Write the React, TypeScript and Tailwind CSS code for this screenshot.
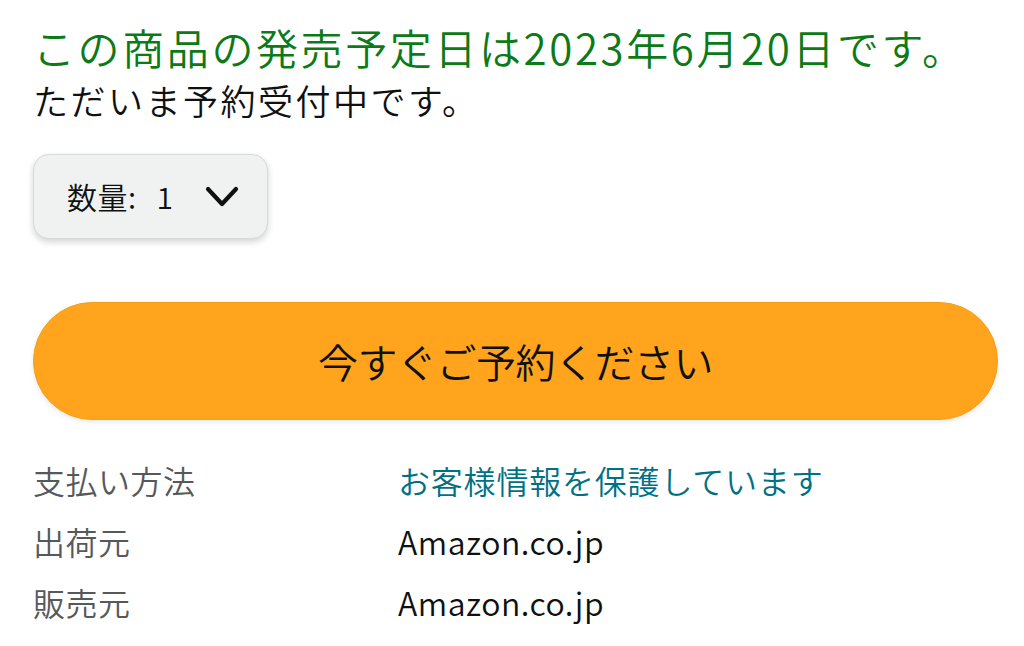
import React from "react";

export default function App() {
  return (
    <div
      className="w-[1024px] h-[646px] bg-white overflow-hidden pl-[33px] pr-[26px] pt-[20px] font-[350]"
      style={{ fontFamily: '"Noto Sans CJK JP", "Noto Sans", sans-serif' }}
    >
      <div className="text-[42px] leading-[54px] text-[#0c7a16] whitespace-nowrap tracking-[2.6px]">
        この商品の発売予定日は2023年6月20日です。
      </div>
      <div className="text-[35px] leading-[54px] text-[#0f1111] whitespace-nowrap -mt-[1px] tracking-[2.5px]">
        ただいま予約受付中です。
      </div>
      <div className="mt-[27px] w-[235px] h-[85px] rounded-[16px] bg-[#f0f2f2] border border-[#d5d9d9] shadow-[0_3px_6px_rgba(15,17,17,0.18)] flex items-center pl-[33px] pr-[28px] justify-between">
        <span className="flex items-center gap-[20px] text-[30px] text-[#0f1111] tracking-[0.5px]">
          <span>数量:</span>
          <span>1</span>
        </span>
        <svg width="34" height="22" viewBox="0 0 34 22" fill="none">
          <path d="M3 3 L17 18 L31 3" stroke="#0f1111" strokeWidth="4.2" strokeLinecap="round" strokeLinejoin="round" />
        </svg>
      </div>
      <div className="mt-[63px] w-[965px] h-[118px] rounded-full bg-[#ffa41c] border border-[#f6a018] shadow-[0_2px_5px_rgba(213,217,217,0.6)] flex items-center justify-center">
        <span className="text-[40px] text-[#0f1111] tracking-[-0.5px]">今すぐご予約ください</span>
      </div>
      <div className="mt-[29px] flex flex-col text-[32px]">
        <div className="flex h-[61px] items-center">
          <span className="w-[365px] text-[#565959] tracking-[0.5px]">支払い方法</span>
          <span className="text-[#007185] tracking-[0.8px]">お客様情報を保護しています</span>
        </div>
        <div className="flex h-[61px] items-center">
          <span className="w-[365px] text-[#565959] tracking-[0.5px]">出荷元</span>
          <span className="text-[#0f1111] tracking-[0.5px]">Amazon.co.jp</span>
        </div>
        <div className="flex h-[61px] items-center">
          <span className="w-[365px] text-[#565959] tracking-[0.5px]">販売元</span>
          <span className="text-[#0f1111] tracking-[0.5px]">Amazon.co.jp</span>
        </div>
      </div>
    </div>
  );
}
